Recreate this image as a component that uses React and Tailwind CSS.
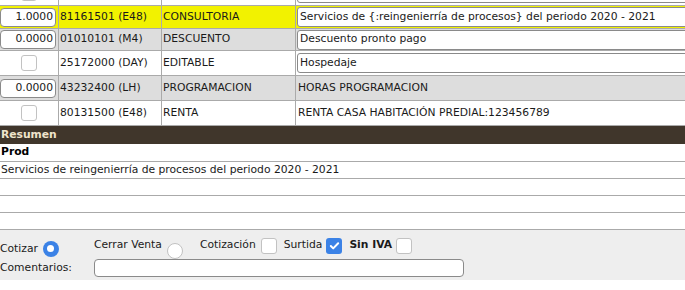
import React from "react";

const rows = [
  { kind: "check", code: "", name: "", desc: "", input: true, bg: "bg-white", h: "h-[25px]" },
  { kind: "qty", qty: "1.0000", code: "81161501 (E48)", name: "CONSULTORIA", desc: "Servicios de {:reingenierría de procesos} del periodo 2020 - 2021", input: true, bg: "bg-[#f2f200]", h: "h-[23px]" },
  { kind: "qty", qty: "0.0000", code: "01010101 (M4)", name: "DESCUENTO", desc: "Descuento pronto pago", input: true, bg: "bg-[#dddddd]", h: "h-[22px]" },
  { kind: "check", code: "25172000 (DAY)", name: "EDITABLE", desc: "Hospedaje", input: true, bg: "bg-white", h: "h-[25px]" },
  { kind: "qty", qty: "0.0000", code: "43232400 (LH)", name: "PROGRAMACION", desc: "HORAS PROGRAMACION", input: false, bg: "bg-[#dddddd]", h: "h-[25px]" },
  { kind: "check", code: "80131500 (E48)", name: "RENTA", desc: "RENTA CASA HABITACIÓN PREDIAL:123456789", input: false, bg: "bg-white", h: "h-[25px]" },
];

const Box = ({ checked }) =>
  checked ? (
    <span className="flex h-[16px] w-[16px] items-center justify-center rounded-[3px] bg-[#3b82e6]">
      <svg width="11" height="11" viewBox="0 0 12 12">
        <path d="M2 6.5l2.6 2.6L10 3.6" fill="none" stroke="white" strokeWidth="2.2" strokeLinecap="round" strokeLinejoin="round" />
      </svg>
    </span>
  ) : (
    <span className="block h-[16px] w-[16px] rounded-[3px] border border-[#c2c2c2] bg-white" />
  );

const Radio = ({ checked }) =>
  checked ? (
    <span className="flex h-[16px] w-[16px] items-center justify-center rounded-full bg-[#3b82e6]">
      <span className="block h-[7px] w-[7px] rounded-full bg-white" />
    </span>
  ) : (
    <span className="block h-[16px] w-[16px] rounded-full border border-[#c2c2c2] bg-white" />
  );

function Row({ r }) {
  return (
    <div className={`flex shrink-0 items-center border-b border-[#aaaaaa] ${r.bg} ${r.h}`}>
      <div className="flex h-full w-[59px] shrink-0 items-center justify-center border-r border-[#aaaaaa]">
        {r.kind === "qty" ? (
          <div className="mr-[2px] flex h-[19px] w-[57px] items-center justify-end rounded-[4px] border border-[#8a8a8a] bg-white pr-[2px]">
            {r.qty}
          </div>
        ) : (
          <span className="ml-[-1px]">
            <Box />
          </span>
        )}
      </div>
      <div className="flex h-full w-[103px] shrink-0 items-center border-r border-[#aaaaaa] pl-[1px]">{r.code}</div>
      <div className="flex h-full w-[134px] shrink-0 items-center border-r border-[#aaaaaa] pl-[1px]">{r.name}</div>
      <div className="flex h-full w-[460px] shrink-0 items-center pl-[1px]">
        {r.input ? (
          <div className="flex h-[20px] w-[420px] items-center rounded-[3px] border border-[#8a8a8a] bg-white pl-[2px]">
            {r.desc}
          </div>
        ) : (
          <span className="pl-[1px]">{r.desc}</span>
        )}
      </div>
    </div>
  );
}

export default function App() {
  return (
    <div
      className="h-[290px] w-[685px] overflow-hidden bg-white text-[10.75px] text-[#1a1a1a]"
      style={{ fontFamily: '"DejaVu Sans", Verdana, sans-serif' }}
    >
      <div className="flex h-[126px] flex-col justify-end overflow-hidden">
        {rows.map((r, i) => (
          <Row key={i} r={r} />
        ))}
      </div>

      <div className="flex h-[18px] items-center bg-[#40362b] pl-[1px] font-bold text-[#efe4cc]">Resumen</div>
      <div className="flex h-[18px] items-center border-b border-[#aaaaaa] pl-[1px] font-bold text-black">Prod</div>
      <div className="flex h-[17px] items-center border-b border-[#aaaaaa] pl-[1px]">
        Servicios de reingenierría de procesos del periodo 2020 - 2021
      </div>
      <div className="h-[17px] border-b border-[#aaaaaa]" />
      <div className="h-[17px] border-b border-[#aaaaaa]" />
      <div className="h-[17px] border-b border-[#aaaaaa]" />

      <div className="h-[50px] bg-[#eeeeee] pt-[5px]">
        <div className="flex h-[22px] items-center">
          <span className="mt-[6px]">Cotizar</span>
          <span className="ml-[5px] mt-[5px]">
            <Radio checked />
          </span>
          <span className="ml-[35px] mt-[-2px]">Cerrar Venta</span>
          <span className="ml-[5px] mt-[9px]">
            <Radio />
          </span>
          <span className="ml-[17px] mt-[-2px]">Cotización</span>
          <span className="ml-[5px] mt-[-1px]">
            <Box />
          </span>
          <span className="ml-[7px] mt-[-2px]">Surtida</span>
          <span className="ml-[4px] mt-[-1px]">
            <Box checked />
          </span>
          <span className="ml-[7px] mt-[-2px] font-bold">Sin IVA</span>
          <span className="ml-[4px] mt-[-1px]">
            <Box />
          </span>
        </div>
        <div className="mt-[2px] flex h-[18px] items-center">
          <span className="w-[94px]">Comentarios:</span>
          <div className="h-[18px] w-[370px] rounded-[4px] border border-[#8a8a8a] bg-white" />
        </div>
      </div>
    </div>
  );
}
